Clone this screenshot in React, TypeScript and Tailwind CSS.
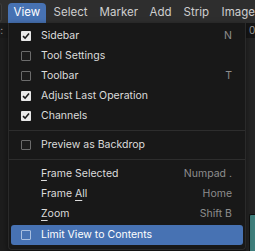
import React from "react";

type Item =
  | { kind: "sep" }
  | {
      kind: "item";
      label: string;
      check?: boolean;
      shortcut?: string;
      underline?: number;
      active?: boolean;
    };

const items: Item[] = [
  { kind: "item", label: "Sidebar", check: true, shortcut: "N" },
  { kind: "item", label: "Tool Settings", check: false },
  { kind: "item", label: "Toolbar", check: false, shortcut: "T" },
  { kind: "item", label: "Adjust Last Operation", check: true },
  { kind: "item", label: "Channels", check: true },
  { kind: "sep" },
  { kind: "item", label: "Preview as Backdrop", check: false },
  { kind: "sep" },
  { kind: "item", label: "Frame Selected", shortcut: "Numpad .", underline: 0 },
  { kind: "item", label: "Frame All", shortcut: "Home", underline: 6 },
  { kind: "item", label: "Zoom", shortcut: "Shift B", underline: 0 },
  { kind: "item", label: "Limit View to Contents", check: false, active: true },
];

function Checkbox({ on, active }: { on: boolean; active?: boolean }) {
  if (on) {
    return (
      <span className="flex h-[10px] w-[10px] items-center justify-center rounded-[1px] bg-[#e8e8e8]">
        <svg width="8" height="8" viewBox="0 0 8 8">
          <path d="M1 4.2 L3.1 6.2 L7 1.6" fill="none" stroke="#1a1a1a" strokeWidth="1.6" />
        </svg>
      </span>
    );
  }
  return (
    <span
      className={`h-[10px] w-[10px] rounded-[1px] border ${
        active ? "border-[#a9bfe0] bg-[#4772b3]" : "border-[#6b6b6b] bg-[#1c1c1c]"
      }`}
    />
  );
}

function Label({ text, underline }: { text: string; underline?: number }) {
  if (underline === undefined) return <span>{text}</span>;
  return (
    <span>
      {text.slice(0, underline)}
      <span className="underline decoration-1 underline-offset-[3px]">{text[underline]}</span>
      {text.slice(underline + 1)}
    </span>
  );
}

export default function App() {
  return (
    <div
      className="relative h-[251px] w-[255px] overflow-hidden bg-[#1d1d1d] text-[11px]"
      style={{ fontFamily: "Inter, 'DejaVu Sans', sans-serif" }}
    >
      {/* Header */}
      <div className="flex h-[23px] items-end bg-[#2e2e2e] text-[#cfcfcf]">
        <div className="mb-[1px] h-[19px] w-[3px] -ml-[1px] rounded-r-[4px] border border-[#3d3d3d] bg-[#282828]" />
        <div className="ml-[6px] flex h-[20px] w-[39px] items-center justify-center rounded-t-[4px] bg-[#4772b3] text-[11.5px] text-white">
          View
        </div>
        <div className="flex h-[20px] items-center pl-[8px] text-[11.5px]">
          <span className="w-[46px]">Select</span>
          <span className="w-[50px]">Marker</span>
          <span className="w-[34px]">Add</span>
          <span className="w-[38px]">Strip</span>
          <span>Image</span>
        </div>
      </div>

      {/* Behind the menu */}
      <div className="flex h-[228px]">
        <div className="w-[8px] bg-[#1d1d1d]">
          <div className="h-[15px] bg-[#1a1a1a] pt-[2px] text-[10px] leading-[12px] text-[#9a9a9a]">
            <span className="-ml-[6px]">0:</span>
          </div>
        </div>
        <div className="w-[238px]" />
        <div className="flex w-[9px] flex-col">
          <div className="h-[15px] bg-[#161616] pl-[3px] text-[10px] leading-[15px] text-[#9a9a9a]">0</div>
          <div className="h-[175px] bg-[#242424]" />
          <div className="flex-1 bg-[#242424] pl-[3px] pt-[1px]">
            <div className="h-full rounded-tl-[2px] border-l border-t border-[#0f0f0f] bg-[#3f7f7c]" />
          </div>
        </div>
      </div>

      {/* Menu */}
      <div className="absolute left-[8px] top-[23px] w-[238px] rounded-b-[4px] border border-t-0 border-[#2a2a2a] bg-[#181818] px-[2px] pb-[3px] pt-[3px] text-[10.5px] text-[#dcdcdc] shadow-[0_2px_6px_rgba(0,0,0,0.5)]">
        {items.map((it, i) =>
          it.kind === "sep" ? (
            <div key={i} className="-mx-[2px] flex h-[9px] items-center">
              <div className="h-px w-full bg-[#2d2d2d]" />
            </div>
          ) : (
            <div
              key={i}
              className={`flex h-[20px] items-center rounded-[3px] pl-[10px] pr-[11px] ${
                it.active ? "my-[1px] h-[18px] bg-[#4772b3] text-white" : ""
              }`}
            >
              <div className="flex w-[20px] items-center">
                {it.check !== undefined && <Checkbox on={it.check} active={it.active} />}
              </div>
              <div className="flex-1">
                <Label text={it.label} underline={it.underline} />
              </div>
              {it.shortcut && <span className="text-[#8d8d8d]">{it.shortcut}</span>}
            </div>
          )
        )}
      </div>
    </div>
  );
}
